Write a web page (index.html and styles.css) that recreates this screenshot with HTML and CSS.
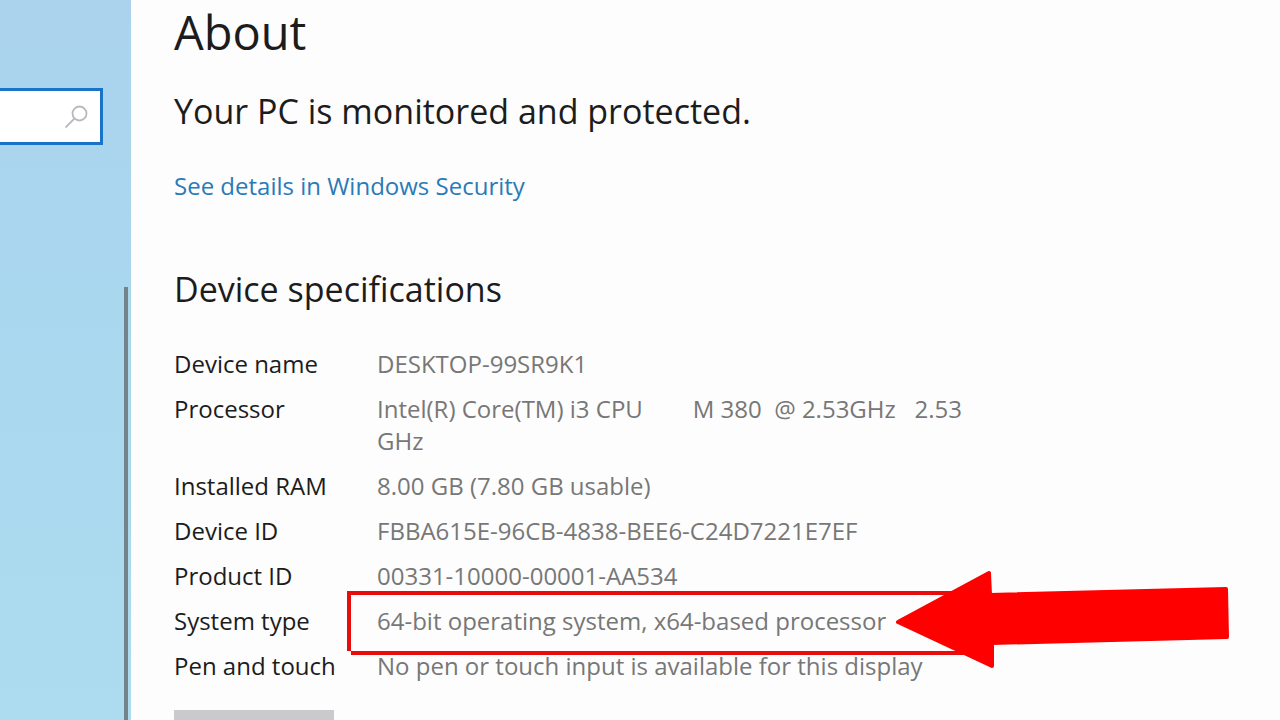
FILE: index.html
```
<!DOCTYPE html>
<html lang="en">
<head>
    <meta charset="utf-8">
    <title>About</title>
    <meta name="viewport" content="width=device-width, initial-scale=1">
    <link rel="stylesheet" href="styles.css">
</head>
<body>
    <div class="settings">
        <aside class="sidebar">
            <form class="search">
                <input type="search" class="search-input" aria-label="Find a setting">
                <button type="button" class="search-button" aria-label="Search">
                    <svg width="24" height="24" viewBox="0 0 24 24" fill="none" stroke="#b9b9c0" stroke-width="1.8">
                        <circle cx="15.5" cy="8.5" r="7"/>
                        <path d="M10.5 13.5L1.5 22.5"/>
                    </svg>
                </button>
            </form>
            <div class="scrollbar"></div>
        </aside>
        <main class="content">
            <h1>About</h1>
            <h2 class="status">Your PC is monitored and protected.</h2>
            <a class="details-link" href="#">See details in Windows Security</a>
            <h2 class="specs-title">Device specifications</h2>
            <table class="specs">
                <tr>
                    <th scope="row">Device name</th>
                    <td>DESKTOP-99SR9K1</td>
                </tr>
                <tr>
                    <th scope="row">Processor</th>
                    <td class="processor">Intel(R) Core(TM) i3 CPU        M 380  @ 2.53GHz   2.53 GHz</td>
                </tr>
                <tr>
                    <th scope="row">Installed RAM</th>
                    <td>8.00 GB (7.80 GB usable)</td>
                </tr>
                <tr>
                    <th scope="row">Device ID</th>
                    <td>FBBA615E-96CB-4838-BEE6-C24D7221E7EF</td>
                </tr>
                <tr>
                    <th scope="row">Product ID</th>
                    <td>00331-10000-00001-AA534</td>
                </tr>
                <tr>
                    <th scope="row">System type</th>
                    <td class="marked">
                        64-bit operating system, x64-based processor
                        <svg class="marker" width="886" height="104" viewBox="0 0 886 104">
                            <g fill="#e80c0c">
                                <path d="M0 24H640V28H4V84H0Z"/>
                                <path d="M4 84H640V88H4Z"/>
                            </g>
                            <path d="M551 55L642 6L643 28L879 22L880 70L645 76V99Z" fill="#f00" stroke="#f00" stroke-width="4" stroke-linejoin="round"/>
                        </svg>
                    </td>
                </tr>
                <tr>
                    <th scope="row">Pen and touch</th>
                    <td>No pen or touch input is available for this display</td>
                </tr>
            </table>
            <button type="button" class="copy-button" aria-label="Copy"></button>
        </main>
    </div>
</body>
</html>
```
FILE: styles.css
```
* {
    box-sizing: border-box;
}

body {
    margin: 0;
    font-family: "Open Sans", "Noto Sans", sans-serif;
    font-size: 24px;
    line-height: 32px;
    color: #1c1c1c;
    background-color: #fdfdfd;
}

.settings {
    display: flex;
    height: 100vh;
    overflow: hidden;
}

.sidebar {
    display: flex;
    flex-direction: column;
    flex: 0 0 131px;
    padding-top: 88px;
    background: linear-gradient(#abd3ed, #a9d8ef 50%, #addcf0);
}

.search {
    display: flex;
    align-items: center;
    width: 103px;
    height: 57px;
    border: 3px solid #1874c8;
    border-left: none;
    background-color: #fff;
}

.search-input {
    flex: 1;
    min-width: 0;
    height: 100%;
    border: none;
    outline: none;
    background: none;
    font: inherit;
}

.search-button {
    display: flex;
    padding: 0 12px 0 0;
    border: none;
    background: none;
}

.scrollbar {
    flex: 1;
    width: 4px;
    margin: 142px 3px 0 auto;
    background-color: #74828c;
}

.content {
    flex: 1;
    padding: 0 40px 0 43px;
}

h1,
h2 {
    margin: 0;
    font-weight: 400;
}

h1 {
    font-size: 47px;
    line-height: 64px;
}

h2 {
    font-size: 34px;
    line-height: 48px;
}

.status {
    margin-top: 23px;
}

.details-link {
    display: block;
    margin-top: 35px;
    color: #2a7ab8;
    text-decoration: none;
}

.specs-title {
    margin: 63px 0 28px;
}

.specs {
    border-collapse: collapse;
}

.specs th,
.specs td {
    padding: 7px 0 6px;
    text-align: left;
    vertical-align: top;
    font-weight: 400;
}

.specs th {
    width: 203px;
}

.specs td {
    width: 600px;
    color: #777;
}

.specs .processor {
    white-space: pre-wrap;
}

.marked {
    position: relative;
}

/* red frame and arrow over the system type */
.marker {
    position: absolute;
    top: -31px;
    left: -30px;
}

.copy-button {
    display: block;
    width: 160px;
    height: 48px;
    margin-top: 22px;
    border: none;
    background-color: #cacacc;
}
```
